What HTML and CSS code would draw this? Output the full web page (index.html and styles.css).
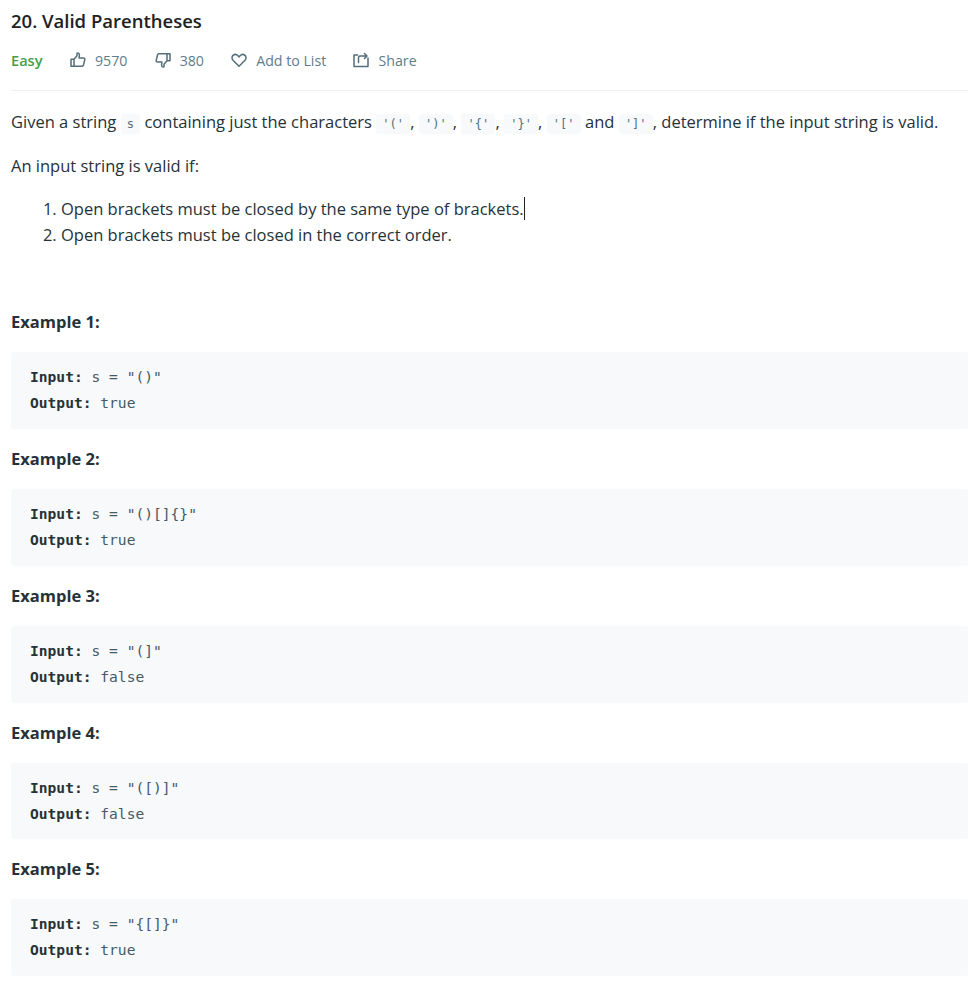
FILE: index.html
```html
<!DOCTYPE html>
<html lang="en">
<head>
<meta charset="utf-8">
<title>20. Valid Parentheses</title>
<link rel="stylesheet" href="styles.css">
</head>
<body>
<main class="page">
  <header class="head">
    <h1 class="title">20. Valid Parentheses</h1>
    <div class="meta">
      <span class="easy">Easy</span>
      <span class="act">
        <svg class="icon" viewBox="0 0 16 16"><path d="M1 7.200h3v7H1zM4 7.200l3-3.400V1.600c0-.5.4-.8.9-.7 1 .3 1.600 1.200 1.500 2.200L9.100 6h4.400c.9 0 1.500.8 1.300 1.600l-1.300 5.400c-.2.7-.8 1.200-1.500 1.200H4"/></svg>
        <span>9570</span>
      </span>
      <span class="act">
        <svg class="icon" viewBox="0 0 16 16"><path d="M15 8.800h-3v-7h3zM12 8.800l-3 3.400v2.200c0 .5-.4.8-.9.7-1-.3-1.600-1.200-1.500-2.200l.3-2.900H2.500c-.9 0-1.500-.8-1.300-1.600l1.300-5.400c.2-.7.800-1.200 1.500-1.200h8"/></svg>
        <span>380</span>
      </span>
      <span class="act">
        <svg class="icon" viewBox="0 0 16 16"><path d="M8 14.200 2 8.200C.6 6.700.7 4.600 2 3.400c1.400-1.200 3.500-1.100 4.700.2L8 5l1.300-1.400c1.200-1.300 3.300-1.400 4.700-.2 1.300 1.200 1.400 3.300 0 4.800z"/></svg>
        <span>Add to List</span>
      </span>
      <span class="act">
        <svg class="icon" viewBox="0 0 16 16"><path d="M4.500 3H1v11.500h14V6M5.500 10.500V5.500c0-.8.600-1.500 1.500-1.500h7M11.500 1.500 14 4l-2.500 2.500"/></svg>
        <span>Share</span>
      </span>
    </div>
  </header>
  <section class="desc">
    <p>Given a string <code>s</code> containing just the characters <code>'('</code>, <code>')'</code>, <code>'{'</code>, <code>'}'</code>, <code>'['</code> and <code>']'</code>, determine if the input string is valid.</p>
    <p>An input string is valid if:</p>
    <ol>
      <li><span class="caret">Open brackets must be closed by the same type of brackets.</span></li>
      <li>Open brackets must be closed in the correct order.</li>
    </ol>
    <h2 class="ex ex-first">Example 1:</h2>
    <pre><b>Input:</b> s = "()"
<b>Output:</b> true</pre>
    <h2 class="ex">Example 2:</h2>
    <pre><b>Input:</b> s = "()[]{}"
<b>Output:</b> true</pre>
    <h2 class="ex">Example 3:</h2>
    <pre><b>Input:</b> s = "(]"
<b>Output:</b> false</pre>
    <h2 class="ex">Example 4:</h2>
    <pre><b>Input:</b> s = "([)]"
<b>Output:</b> false</pre>
    <h2 class="ex">Example 5:</h2>
    <pre><b>Input:</b> s = "{[]}"
<b>Output:</b> true</pre>
  </section>
</main>
</body>
</html>
```
FILE: styles.css
```css
* { box-sizing: border-box; }
html, body { margin: 0; padding: 0; background: #fff; }
body {
  font-family: "Open Sans", "Noto Sans", sans-serif;
  color: #263238;
  overflow: hidden;
}
.page { padding: 0 0 0 11px; }
.head {
  border-bottom: 1px solid #eceff1;
  height: 91px;
  padding-top: 8px;
}
.title {
  margin: 0;
  font-size: 18.5px;
  font-weight: 600;
  line-height: 26px;
  color: #212121;
}
.meta {
  display: flex;
  align-items: center;
  margin-top: 13px;
  height: 26px;
  font-size: 14.200px;
  color: #607d8b;
}
.easy { color: #43a047; font-weight: 600; width: 59px; font-size: 14.600px; }
.act { display: flex; align-items: center; gap: 9px; margin-right: 27.200px; }
.icon {
  width: 16px;
  height: 16px;
  fill: none;
  stroke: #546e7a;
  stroke-width: 1.5;
  stroke-linejoin: round;
  stroke-linecap: round;
}
.desc { font-size: 16.5px; }
.desc p { margin: 0; line-height: 26px; }
.desc p:first-child { margin-top: 18px; }
.desc p + p { margin-top: 16px; }
code {
  font-family: "DejaVu Sans Mono", monospace;
  font-size: 12px;
  color: #546e7a;
  background: #f7f9fa;
  border-radius: 3px;
  padding: 3px 6.200px;
}
ol { margin: 17px 0 0; padding-left: 50px; }
li { line-height: 26px; }
.caret { border-right: 1px solid #212121; }
.ex {
  margin: 0;
  font-size: 16.5px;
  font-weight: 700;
  line-height: 26px;
  color: #263238;
}
.ex-first { margin-top: 61.300px; }
pre {
  margin: 17px 0 17px;
  height: 76.750px;
  padding: 12px 19px;
  background: #f7f9fa;
  border-radius: 3px;
  font-family: "DejaVu Sans Mono", monospace;
  font-size: 14.600px;
  line-height: 26px;
  color: #455a64;
}
pre b { color: #263238; }
```
